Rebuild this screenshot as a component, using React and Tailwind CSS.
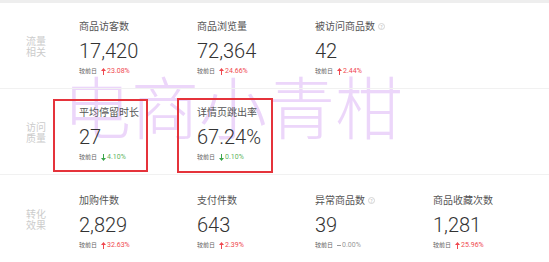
import React from "react";

const CJK = { fontFamily: '"Noto Sans CJK SC", "Noto Sans", sans-serif' };
const NUM = { fontFamily: 'Roboto, "Liberation Sans", sans-serif' };

function Arrow({ dir }) {
  if (dir === "flat") {
    return <span className="inline-block w-[4px] h-[1px] bg-[#999] mr-[1px]" />;
  }
  const color = dir === "up" ? "#f0474f" : "#3aa54a";
  return (
    <svg width="5" height="7" viewBox="0 0 5 7" className="mr-[1px] shrink-0">
      {dir === "up" ? (
        <g fill={color}>
          <path d="M2.5 0 L5 3 L0 3 Z" />
          <rect x="2" y="3" width="1" height="4" />
        </g>
      ) : (
        <g fill={color}>
          <path d="M2.5 7 L5 4 L0 4 Z" />
          <rect x="2" y="0" width="1" height="4" />
        </g>
      )}
    </svg>
  );
}

function Help() {
  return (
    <span className="ml-[3px] inline-flex items-center justify-center w-[7px] h-[7px] rounded-full border border-[#d4d4d4] text-[5px] leading-none text-[#bbb]">
      ?
    </span>
  );
}

function Cell({ title, help, value, dir, pct }) {
  const pctColor = dir === "up" ? "text-[#f0474f]" : dir === "down" ? "text-[#5fb55f]" : "text-[#999]";
  return (
    <div className="w-[118px] shrink-0">
      <div className="flex items-center h-[16px] text-[10px] leading-none text-[#555]" style={CJK}>
        {title}
        {help && <Help />}
      </div>
      <div className="mt-[4px] h-[26px] leading-[26px] text-[20px] font-light text-[#333]" style={NUM}>
        {value}
      </div>
      <div className="mt-[1px] h-[12px] flex items-center leading-none">
        <span className="text-[6px] leading-none text-[#666] mr-[4px]" style={CJK}>较前日</span>
        <Arrow dir={dir} />
        <span className={`text-[7px] leading-none ${pctColor}`} style={NUM}>{pct}</span>
      </div>
    </div>
  );
}

function Row({ label, items, pt, children, last }) {
  return (
    <div className={`relative flex ${last ? "h-[87px]" : "h-[86px] border-b border-[#f1f1f1]"}`}>
      <div className="w-[79px] shrink-0 flex items-center pl-[26px]">
        <div className="flex flex-col text-[10px] leading-[11px] text-[#cccccc]" style={CJK}>
          <span>{label[0]}</span>
          <span>{label[1]}</span>
        </div>
      </div>
      <div className="flex" style={{ paddingTop: pt }}>
        {items.map((it, i) => (
          <Cell key={i} {...it} />
        ))}
      </div>
      {children}
    </div>
  );
}

export default function App() {
  return (
    <div className="relative w-[549px] h-[262px] bg-white overflow-hidden">
      <div
        className="absolute left-[63px] top-[71px] text-[68px] leading-none font-light text-[#ecd6fa] whitespace-nowrap pointer-events-none"
        style={CJK}
      >
        电商小青柑
      </div>
      <div className="relative z-10">
        <div className="h-[3px] bg-[#eeeeee]" />
        <Row
          label={["流量", "相关"]}
          pt={15}
          items={[
            { title: "商品访客数", value: "17,420", dir: "up", pct: "23.08%" },
            { title: "商品浏览量", value: "72,364", dir: "up", pct: "24.66%" },
            { title: "被访问商品数", help: true, value: "42", dir: "up", pct: "2.44%" },
          ]}
        />
        <Row
          label={["访问", "质量"]}
          pt={15}
          items={[
            { title: "平均停留时长", value: "27", dir: "down", pct: "4.10%" },
            { title: "详情页跳出率", value: "67.24%", dir: "down", pct: "0.10%" },
          ]}
        >
          <div className="absolute left-[53px] top-[10px] w-[95px] h-[73px] border-2 border-[#e5333b]" />
          <div className="absolute left-[177px] top-[9px] w-[96px] h-[75px] border-2 border-[#e5333b]" />
        </Row>
        <Row
          label={["转化", "效果"]}
          pt={17}
          last
          items={[
            { title: "加购件数", value: "2,829", dir: "up", pct: "32.63%" },
            { title: "支付件数", value: "643", dir: "up", pct: "2.39%" },
            { title: "异常商品数", help: true, value: "39", dir: "flat", pct: "0.00%" },
            { title: "商品收藏次数", value: "1,281", dir: "up", pct: "25.96%" },
          ]}
        />
      </div>
    </div>
  );
}
